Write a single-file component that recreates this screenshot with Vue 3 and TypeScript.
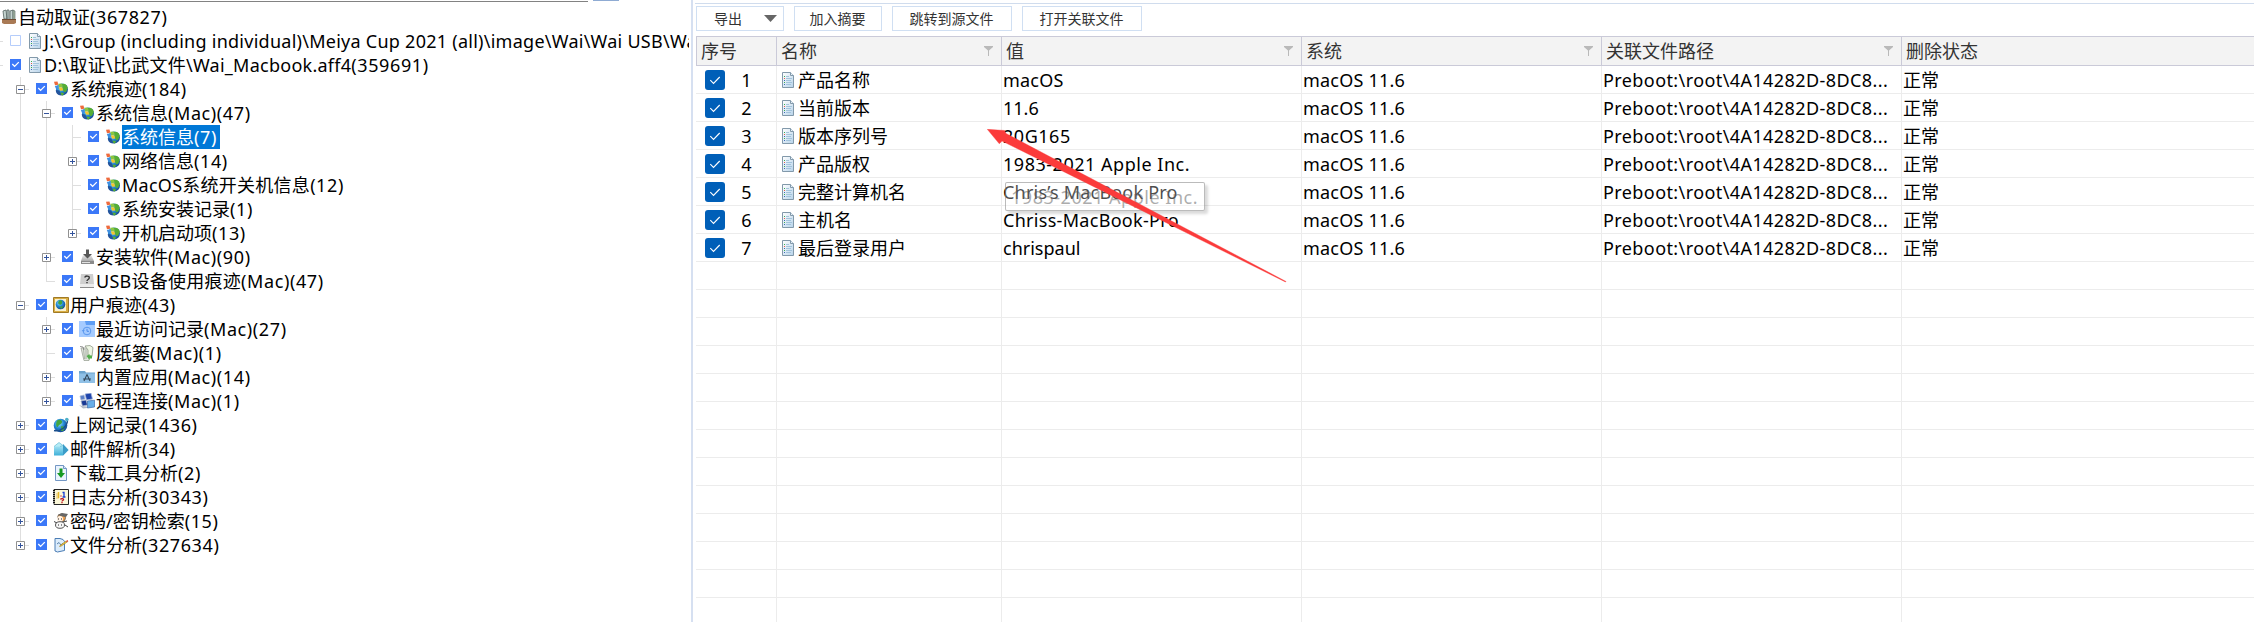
<script setup lang="ts">
import { computed } from 'vue'

type Icon =
  | 'root' | 'doc' | 'sys' | 'install' | 'usb' | 'user' | 'recent' | 'trash'
  | 'apps' | 'remote' | 'web' | 'mail' | 'download' | 'log' | 'key' | 'file'

interface Node {
  label: string
  level: number
  icon: Icon
  checked?: boolean
  expander?: '+' | '-'
  selected?: boolean
}

const nodes: Node[] = [
  { label: '自动取证(367827)', level: 0, icon: 'root' },
  { label: 'J:\\Group (including individual)\\Meiya Cup 2021 (all)\\image\\Wai\\Wai USB\\Wai', level: 1, icon: 'doc', checked: false },
  { label: 'D:\\取证\\比武文件\\Wai_Macbook.aff4(359691)', level: 1, icon: 'doc', checked: true },
  { label: '系统痕迹(184)', level: 2, icon: 'sys', checked: true, expander: '-' },
  { label: '系统信息(Mac)(47)', level: 3, icon: 'sys', checked: true, expander: '-' },
  { label: '系统信息(7)', level: 4, icon: 'sys', checked: true, selected: true },
  { label: '网络信息(14)', level: 4, icon: 'sys', checked: true, expander: '+' },
  { label: 'MacOS系统开关机信息(12)', level: 4, icon: 'sys', checked: true },
  { label: '系统安装记录(1)', level: 4, icon: 'sys', checked: true },
  { label: '开机启动项(13)', level: 4, icon: 'sys', checked: true, expander: '+' },
  { label: '安装软件(Mac)(90)', level: 3, icon: 'install', checked: true, expander: '+' },
  { label: 'USB设备使用痕迹(Mac)(47)', level: 3, icon: 'usb', checked: true },
  { label: '用户痕迹(43)', level: 2, icon: 'user', checked: true, expander: '-' },
  { label: '最近访问记录(Mac)(27)', level: 3, icon: 'recent', checked: true, expander: '+' },
  { label: '废纸篓(Mac)(1)', level: 3, icon: 'trash', checked: true },
  { label: '内置应用(Mac)(14)', level: 3, icon: 'apps', checked: true, expander: '+' },
  { label: '远程连接(Mac)(1)', level: 3, icon: 'remote', checked: true, expander: '+' },
  { label: '上网记录(1436)', level: 2, icon: 'web', checked: true, expander: '+' },
  { label: '邮件解析(34)', level: 2, icon: 'mail', checked: true, expander: '+' },
  { label: '下载工具分析(2)', level: 2, icon: 'download', checked: true, expander: '+' },
  { label: '日志分析(30343)', level: 2, icon: 'log', checked: true, expander: '+' },
  { label: '密码/密钥检索(15)', level: 2, icon: 'key', checked: true, expander: '+' },
  { label: '文件分析(327634)', level: 2, icon: 'file', checked: true, expander: '+' },
]

// A guide column is drawn for each ancestor level that still has siblings below.
interface Guide { depth: number; last: boolean; own: boolean }
const rows = computed(() =>
  nodes.map((node, i) => {
    const guides: Guide[] = []
    for (let depth = 2; depth <= node.level; depth++) {
      let more = false
      for (let j = i + 1; j < nodes.length; j++) {
        if (nodes[j].level < depth) break
        if (nodes[j].level === depth) { more = true; break }
      }
      const own = depth === node.level
      if (own || more) guides.push({ depth, last: !more, own })
    }
    return { ...node, guides }
  }),
)

// Splits a label into its name and the bracketed counts at its end.
const runs = (text: string) => {
  const cls = /^[A-Z]/.test(text) ? 'path' : 'title'
  const m = text.match(/^(.*?)((?:\(\w+\))+)$/)
  return m ? [{ t: m[1], cls }, { t: m[2], cls: 'count' }] : [{ t: text, cls }]
}

const columns = [
  { title: '序号', filter: false },
  { title: '名称', filter: true },
  { title: '值', filter: true },
  { title: '系统', filter: true },
  { title: '关联文件路径', filter: true },
  { title: '删除状态', filter: false },
]

const records = [
  { name: '产品名称', value: 'macOS', pace: 'snug' },
  { name: '当前版本', value: '11.6', pace: '' },
  { name: '版本序列号', value: '20G165', pace: 'loose' },
  { name: '产品版权', value: '1983-2021 Apple Inc.', pace: 'loose' },
  { name: '完整计算机名', value: 'Chris’s MacBook Pro', pace: 'snug' },
  { name: '主机名', value: 'Chriss-MacBook-Pro', pace: 'mid' },
  { name: '最后登录用户', value: 'chrispaul', pace: '' },
]
const blankRows = 13
</script>

<template>
  <div class="window">
    <svg class="defs" aria-hidden="true">
      <defs>
        <radialGradient id="globe" cx=".4" cy=".35" r=".7">
          <stop offset="0" stop-color="#9be4ff" />
          <stop offset=".5" stop-color="#2489d4" />
          <stop offset="1" stop-color="#123f8c" />
        </radialGradient>
        <linearGradient id="paper" x2="1" y2="1">
          <stop offset="0" stop-color="#fff" />
          <stop offset="1" stop-color="#b7d3ea" />
        </linearGradient>
        <linearGradient id="metal" x2="0" y2="1">
          <stop offset="0" stop-color="#e9e9e9" />
          <stop offset="1" stop-color="#8d8d8d" />
        </linearGradient>
        <linearGradient id="aqua" x2="0" y2="1">
          <stop offset="0" stop-color="#b8ecf8" />
          <stop offset="1" stop-color="#3fb0d8" />
        </linearGradient>
        <symbol id="i-root" viewBox="0 0 16 16">
          <path d="M2 2l3-1 1 9H3zM6 1h2v10H6zM9 2l3-1v10H9z" fill="#c4d3cf" stroke="#53625f" stroke-width=".8" />
          <path d="M12 1l2 1v9h-2z" fill="#a9b9a6" stroke="#53625f" stroke-width=".6" />
          <path d="M1 10h14v4l-2 1H3l-2-1z" fill="#a97a55" /><path d="M1 10h14v1H1z" fill="#6e4a32" />
        </symbol>
        <symbol id="i-doc" viewBox="0 0 16 16">
          <path d="M2.5.5h8l3 3v12h-11z" fill="url(#paper)" stroke="#8299aa" />
          <path d="M10.500 .5v3h3" fill="#e8f3fc" stroke="#8299aa" />
          <path d="M4 4.500h1M4 10.500h1" stroke="#38b04e" /><path d="M4 6.500h1" stroke="#e25a4a" />
          <path d="M4 8.500h1M4 12.500h1" stroke="#3868b8" /><path d="M6 4.500h3M6 6.500h6M6 8.500h5M6 10.500h6M6 12.500h5" stroke="#9cbfd9" stroke-width=".9" />
        </symbol>
        <symbol id="i-sys" viewBox="0 0 16 16">
          <circle cx="9" cy="8.500" r="6" fill="url(#globe)" />
          <path d="M9 3c3-.8 5.500 1 5.800 4-1 2.500-2 5-3.500 4s-1-3-2-4zM7.500 11.500l3.500.5-1 2.500c-1.500 0-2.500-1-2.500-3z" fill="#55ad35" />
          <path d="M1 .8l3.500-.3.8 3.200-3.300.6z" fill="#ee6a3c" /><path d="M5.200 2.800l3.600-.2.8 3.200-3.400.4z" fill="#8bc63f" />
          <path d="M1.800 5l3.200-.4 1 3.200-2.800.5z" fill="#3f8fe0" /><path d="M5.700 6.600l3.500-.3 1 3.200-3 .3z" fill="#f6c62c" />
          <path d="M2.800 9l3.500.5 2 4.800c-3 .2-5.500-1.500-5.500-5.300z" fill="#24549c" />
        </symbol>
        <symbol id="i-install" viewBox="0 0 16 16">
          <path d="M4 6h8l3 6v3H2v-3z" fill="url(#metal)" /><path d="M2 12h13v3H2z" fill="#8b8b8b" />
          <path d="M3 13h8v1H3z" fill="#e2e2e2" /><path d="M7 .5h3v4.500h3L8.500 9.500 4 5h3z" fill="#585858" />
        </symbol>
        <symbol id="i-usb" viewBox="0 0 16 16">
          <path d="M2 1h12l1 10H1z" fill="#cfcfcf" /><path d="M1 11h14v4H1z" fill="#ececec" />
          <path d="M5.700 4.500c.5-2 4.600-2 4.600.2C10.300 6.500 8 6.400 8 8" fill="none" stroke="#333" stroke-width="1.300" />
          <path d="M7.300 9h1.400v1.300H7.300z" fill="#333" /><path d="M1 14.500h14" stroke="#8b8b8b" />
        </symbol>
        <symbol id="i-user" viewBox="0 0 16 16">
          <path d="M.5.5h15v15H.5z" fill="#d9ad43" stroke="#a07a26" /><path d="M2 2h11v12H2z" fill="#f8f1cf" />
          <circle cx="7.500" cy="7.500" r="4.800" fill="url(#globe)" /><path d="M6 3.500c3-1 4 1 3 3S6 8 5 6zM6 10l4-1-1 3z" fill="#3fa444" />
        </symbol>
        <symbol id="i-recent" viewBox="0 0 16 16">
          <path d="M0 0h7l1 2h8v14H0z" fill="#a5cbff" /><path d="M6 0h10v4H7z" fill="#5d9df5" />
          <circle cx="8" cy="10" r="3.800" fill="none" stroke="#5a98ee" /><path d="M8 7.800V10.300h2" fill="none" stroke="#4b8bea" />
          <path d="M2.800 9h3L4.300 11z" fill="#5a98ee" />
        </symbol>
        <symbol id="i-trash" viewBox="0 0 16 16">
          <path d="M2 3h9l-1 12.500H5z" fill="#e2e7df" stroke="#929a8d" stroke-width=".7" />
          <path d="M4.500 4l1 10M7 4v10" stroke="#a9b1a5" /><path d="M6 1l5-.5 3 2-1 9-4-1V5z" fill="#eef6e4" stroke="#818b7a" stroke-width=".7" />
          <path d="M7.500 11l3-2v1.500h2.500v3h-2.500V15z" fill="#52ad4b" /><path d="M1 1.500l3 .5 1 3" stroke="#777" fill="none" stroke-width=".8" />
        </symbol>
        <symbol id="i-apps" viewBox="0 0 16 16">
          <path d="M0 2h6l1 1.500h9V14H0z" fill="#6ca3cd" /><path d="M0 4.500h16V14H0z" fill="#8fc0e6" />
          <path d="M8 5.500L5 12M8 5.500L11 12M4 10h8" stroke="#34495b" stroke-width="1.100" fill="none" />
        </symbol>
        <symbol id="i-remote" viewBox="0 0 16 16">
          <path d="M1 3l4-1 1 4-4 1z" fill="#5a7fc9" stroke="#a7b7d4" stroke-width=".7" />
          <path d="M6 1l6-1 1.500 6-6 1z" fill="#1f45ac" stroke="#a9b9dc" stroke-width=".8" />
          <path d="M2 8l5-1 1.500 5-5 1z" fill="#1a3994" stroke="#a9b4c8" stroke-width=".8" />
          <path d="M8.500 8l7-.8V14l-7 1z" fill="#68aee8" stroke="#3d6cab" stroke-width=".7" />
          <path d="M0 12l3 1 5 .5v1.500l-4 .5z" fill="#b3bbc7" />
        </symbol>
        <symbol id="i-web" viewBox="0 0 16 16">
          <circle cx="7.500" cy="8.500" r="6.800" fill="url(#globe)" />
          <path d="M4 3.500c3-2 6 0 5 2S6 7.500 5 9.500 2 7.500 4 3.500zM8 9.500c3-1 4 1 3 3s-3 2-3 0z" fill="#45a640" />
          <path d="M1 13.500C8 15 15 9 14.500 2" fill="none" stroke="#1b4f8c" stroke-width="1.300" /><circle cx="13.800" cy="2.600" r="1.800" fill="#4fb0c9" />
        </symbol>
        <symbol id="i-mail" viewBox="0 0 16 16">
          <path d="M1 5h9V3L15.500 9 10 14.500H1z" fill="url(#aqua)" /><path d="M10 3l5.500 6-5.500 5.500z" fill="#3c9cc8" />
          <path d="M1 5.500l5-4 4 3-3 1" fill="#b5ecf6" stroke="#65b9d2" stroke-width=".7" />
        </symbol>
        <symbol id="i-download" viewBox="0 0 16 16">
          <path d="M2.500.5h8l3 3v12h-11z" fill="#eaf3fd" stroke="#7397c4" /><path d="M10.500.5v3h3" fill="#d2e4f8" stroke="#7397c4" />
          <path d="M6.500 3.500h3V8H12L8 13 4 8h2.500z" fill="#159a22" />
        </symbol>
        <symbol id="i-log" viewBox="0 0 16 16">
          <path d="M1 .5h14.500v15H1z" fill="#fbf7d8" stroke="#252525" />
          <path d="M1 1v14" stroke="#111" stroke-width="2" stroke-dasharray="1 1" /><path d="M3 4h3v6H3z" fill="#f4dfa0" />
          <path d="M5.500 3v6" stroke="#e5b62b" stroke-width="1.500" /><path d="M7 7h2" stroke="#e88a8a" stroke-width="1.500" />
          <path d="M9.500 3.500H11V8M9.500 8h3" stroke="#1a3fd2" stroke-width="1.300" fill="none" />
          <path d="M7.500 10.500c.5-1.500 3.500-1 3 .3-.3.800-1.500.600-1.500 1.700M9 13v1.200" stroke="#bd1622" stroke-width="1.300" fill="none" />
        </symbol>
        <symbol id="i-key" viewBox="0 0 16 16">
          <circle cx="8.500" cy="4.800" r="4" fill="#f2a04c" stroke="#555" stroke-width=".8" /><path d="M5 2l4-2 6 1-2 3-4-.5z" fill="#666" />
          <circle cx="7" cy="6" r="3" fill="#fff1e2" /><ellipse cx="7" cy="12" rx="4.500" ry="3.300" fill="#f7f7f7" stroke="#555" />
          <path d="M1 8.500l3 1.500M10 9l4-1M12 12l3 2" stroke="#444" /><path d="M5 6h1M8 6h1M5 12h1M8 12h1" stroke="#222" />
        </symbol>
        <symbol id="i-file" viewBox="0 0 16 16">
          <path d="M2 1.500h5l3 1 1.500 2v9l-7 1.500L2 14z" fill="#dcecfb" stroke="#4b7db5" /><path d="M4 7l2-1.500 2 2.500 2-1.500" stroke="#5a83ad" fill="none" />
          <path d="M7 8.500l6-4.500 1 1.200-6 4-1.500.3z" fill="#f2c73b" stroke="#8d6c22" stroke-width=".5" /><path d="M13 4l1.500-1 .8 1.300-1.300 1z" fill="#d8432e" />
        </symbol>
      </defs>
    </svg>

    <aside class="tree-panel">
      <div class="tree-top"><span class="field" /><span class="tab" /></div>
      <ul class="tree">
        <li v-for="(row, i) in rows" :key="i" :class="['node', 'level-' + row.level]">
          <template v-for="g in row.guides" :key="g.depth">
            <i :class="['guide', 'depth-' + g.depth, { last: g.last, own: g.own }]" />
          </template>
          <i v-if="row.level === 1" class="stub" />
          <span v-if="row.level > 0" class="toggle">
            <svg v-if="row.expander" width="9" height="9" viewBox="0 0 9 9">
              <path d="M.5.5h8v8h-8z" fill="#fff" stroke="#919191" />
              <path :d="row.expander === '+' ? 'M2 4.500h5M4.500 2v5' : 'M2 4.500h5'" stroke="#34549c" />
            </svg>
          </span>
          <svg v-if="row.level > 0" class="tick" width="11" height="11" viewBox="0 0 11 11">
            <path v-if="row.checked" d="M0 0h11v11H0z" fill="#3b78f8" />
            <path v-else d="M.5.5h10v10H.5z" fill="#fff" stroke="#b5cdfb" />
            <path v-if="row.checked" d="M2.300 5l2.300 2.400 4.200-4.300" fill="none" stroke="#fff" stroke-width="1.300" />
          </svg>
          <svg class="icon" width="16" height="16"><use :href="'#i-' + row.icon" /></svg>
          <span :class="['label', { selected: row.selected }]"><span v-for="(r, k) in runs(row.label)" :key="k" :class="r.cls">{{ r.t }}</span></span>
        </li>
      </ul>
    </aside>

    <main class="content">
      <div class="toolbar">
        <button class="btn export">导出<svg width="13" height="7" viewBox="0 0 13 7"><path d="M0 0h13L6.500 7z" fill="#666" /></svg></button>
        <button class="btn">加入摘要</button>
        <button class="btn wide">跳转到源文件</button>
        <button class="btn wide">打开关联文件</button>
      </div>
      <div class="grid">
        <div class="row head">
          <div v-for="c in columns" :key="c.title" class="cell">
            <span>{{ c.title }}</span>
            <svg v-if="c.filter" width="9" height="10" viewBox="0 0 9 10"><path d="M0 0h9v1L5 4.500V10H4V4.500L0 1z" fill="#b9b9b9" /></svg>
          </div>
        </div>
        <div v-for="(r, i) in records" :key="i" class="row">
          <div class="cell index">
            <svg width="20" height="20" viewBox="0 0 20 20">
              <rect width="20" height="20" rx="3" fill="#005fb8" />
              <path d="M5.300 10.200l3.200 3.200 6.200-6.400" fill="none" stroke="#fff" stroke-width="1.100" />
            </svg>
            <span class="num">{{ i + 1 }}</span>
          </div>
          <div class="cell name"><svg width="16" height="16"><use href="#i-doc" /></svg>{{ r.name }}</div>
          <div :class="['cell', r.pace]">{{ r.value }}</div>
          <div class="cell snug">macOS 11.6</div>
          <div class="cell route">Preboot:\root\4A14282D-8DC8...</div>
          <div class="cell">正常</div>
        </div>
        <div v-for="n in blankRows" :key="'b' + n" class="row">
          <div v-for="c in columns" :key="c.title" class="cell" />
        </div>
      </div>
    </main>

    <div class="tooltip loose">1983-2021 Apple Inc.</div>
    <svg class="arrow" width="302" height="156" viewBox="0 0 302 156">
      <path d="M.3.300L17.500 1.500 19 4.500 299 152.500 298.500 153 15 12 12.300 14.800z" fill="#fb3b3b" stroke="#fb3b3b" stroke-width=".4" />
    </svg>
  </div>
</template>

<style>
body { margin: 0; overflow: hidden; background: #fff; }
</style>

<style scoped>
.window {
  position: relative;
  display: flex;
  width: 2254px;
  height: 622px;
  overflow: hidden;
  background: #fff;
  color: #000;
  font: 18px/24px 'Noto Sans', 'Noto Sans CJK SC', sans-serif;
  white-space: pre;
}
.defs { position: absolute; width: 0; height: 0; }
svg { display: block; flex: none; }
.title { letter-spacing: 0; }
.count { letter-spacing: .6px; }
.path { letter-spacing: .26px; }
.loose { letter-spacing: .52px; }
.mid { letter-spacing: .3px; }
.snug { letter-spacing: .2px; }
.route { letter-spacing: .41px; }

.tree-panel { width: 689px; flex: none; overflow: hidden; }
.tree-top { display: flex; height: 5px; }
.field { width: 588px; height: 1px; border-bottom: 1px solid #828282; }
.tab { width: 26px; height: 1px; margin-left: 5px; background: #8fabd3; }
.tree { margin: 0; padding: 0; list-style: none; }
.node { position: relative; display: flex; align-items: center; height: 24px; }
.level-0 { padding-left: 1px; }
.level-2 { padding-left: 16px; }
.level-3 { padding-left: 42px; }
.level-4 { padding-left: 68px; }
.toggle { position: relative; width: 20px; height: 9px; flex: none; }
.level-1 .toggle { width: 10px; }
.tick { position: relative; top: -1px; margin-right: 6px; }
.icon { margin-right: 1px; }
.label { height: 24px; padding-right: 3px; line-height: 24px; }
.label.selected { background: #0078d7; color: #fff; }

/* tree guide lines run behind the expander boxes */
.guide { position: absolute; top: 0; width: 9px; height: 24px; }
.guide::before { content: ''; position: absolute; left: 0; top: 0; width: 1px; height: 100%; background: #dedede; }
.guide.last::before { height: 12px; }
.guide.own::after { content: ''; position: absolute; left: 0; top: 12px; width: 9px; height: 1px; background: #dedede; }
.depth-2 { left: 20px; }
.depth-3 { left: 46px; }
.depth-4 { left: 72px; }
.stub { position: absolute; left: 0; top: 12px; width: 3px; height: 1px; background: #dedede; }

.content {
  flex: 1;
  min-width: 0;
  margin-left: 2px;
  padding-left: 3px;
  border-left: 2px solid #d6e0f1;
}
.toolbar {
  display: flex;
  gap: 10px;
  box-sizing: border-box;
  height: 33px;
  margin-top: 3px;
  margin-left: -1px;
  padding: 2px 0 0 1px;
  border-top: 1px solid #d0dced;
}
.btn {
  box-sizing: border-box;
  width: 88px;
  height: 25px;
  padding: 0 1px 1px 0;
  border: 1px solid #d0dff2;
  background: #fff;
  color: #333;
  font: 14px/22px 'Noto Sans CJK SC', sans-serif;
}
.btn.wide { width: 120px; }
.btn.export { display: flex; align-items: center; justify-content: space-between; padding: 0 6px 1px 17px; }
.row {
  display: grid;
  grid-template-columns: 81px 225px 300px 300px 300px 1fr;
  box-sizing: border-box;
  height: 28px;
}
.cell {
  display: flex;
  align-items: center;
  box-sizing: border-box;
  min-width: 0;
  padding-left: 1px;
  border-right: 1px solid #ececec;
  border-bottom: 1px solid #ececec;
  overflow: hidden;
  line-height: 26px;
}
.cell:last-child { border-right: 0; }
.index { padding-left: 9px; }
.num { width: 43px; text-align: center; }
.name svg { margin: 0 2px; }
.head { height: 30px; border-left: 1px solid #cacad8; background: #f3f3f3; color: #333; grid-template-columns: 80px 225px 300px 300px 300px 1fr; }
.head .cell { justify-content: space-between; padding: 0 8px 0 4px; border-color: #cacad8; border-top: 1px solid #cacad8; }

.tooltip {
  position: absolute;
  left: 1005px;
  top: 182px;
  box-sizing: border-box;
  width: 200px;
  height: 29px;
  padding-left: 5px;
  border: 1px solid rgba(120, 120, 120, .5);
  border-radius: 2px;
  background: rgba(255, 255, 255, .3);
  box-shadow: 3px 3px 3px rgba(0, 0, 0, .15);
  color: rgba(90, 90, 90, .5);
  line-height: 28px;
}
.arrow { position: absolute; left: 987px; top: 129px; }
</style>
